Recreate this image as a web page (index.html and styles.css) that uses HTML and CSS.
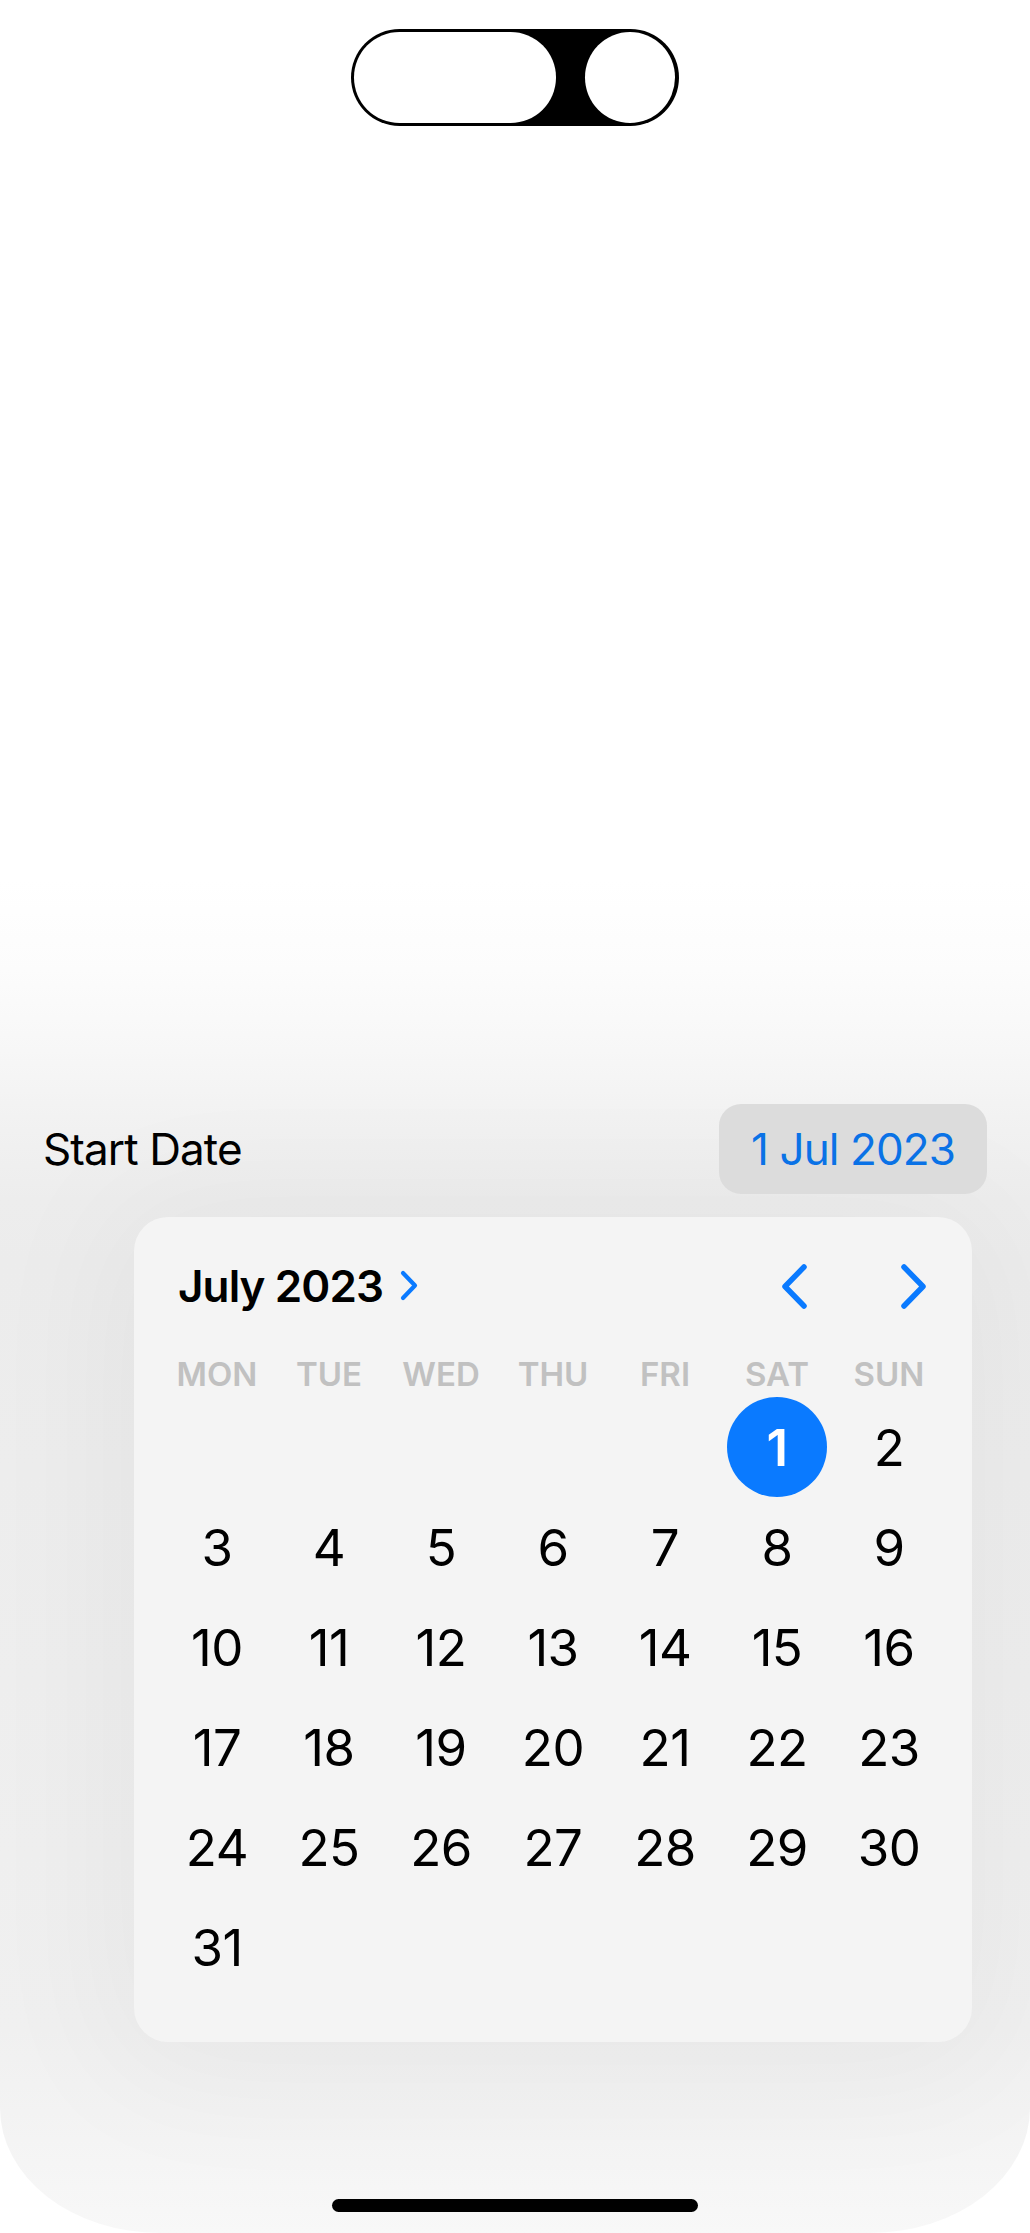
FILE: index.html
```html
<!DOCTYPE html>
<html lang="en">
<head>
<meta charset="utf-8">
<title>Start Date</title>
<link rel="stylesheet" href="styles.css">
</head>
<body>
<div class="island"><span class="island-pill"></span><span class="island-dot"></span></div>

<main class="sheet">
  <div class="field-row">
    <span class="field-label">Start Date</span>
    <button class="date-button">1 Jul 2023</button>
  </div>

  <section class="popover">
    <header class="cal-header">
      <div class="cal-title">
        <span>July 2023</span>
        <svg class="title-chevron" width="18" height="31" viewBox="0 0 18 31"><polyline points="3,3 15,15.5 3,28" fill="none" stroke="#0a7aff" stroke-width="4.2" stroke-linecap="round" stroke-linejoin="round"/></svg>
      </div>
      <div class="cal-nav">
        <svg width="28" height="47" viewBox="0 0 28 47"><polyline points="24,4 5,23.5 24,43" fill="none" stroke="#0a7aff" stroke-width="5.5" stroke-linecap="round" stroke-linejoin="round"/></svg>
        <svg width="28" height="47" viewBox="0 0 28 47"><polyline points="4,4 23,23.5 4,43" fill="none" stroke="#0a7aff" stroke-width="5.5" stroke-linecap="round" stroke-linejoin="round"/></svg>
      </div>
    </header>

    <div class="weekdays">
      <span>MON</span><span>TUE</span><span>WED</span><span>THU</span><span>FRI</span><span>SAT</span><span>SUN</span>
    </div>

    <div class="days">
      <span></span><span></span><span></span><span></span><span></span>
      <span class="day selected"><span class="sel-circle">1</span></span>
      <span class="day">2</span>
      <span class="day">3</span><span class="day">4</span><span class="day">5</span><span class="day">6</span><span class="day">7</span><span class="day">8</span><span class="day">9</span>
      <span class="day">10</span><span class="day">11</span><span class="day">12</span><span class="day">13</span><span class="day">14</span><span class="day">15</span><span class="day">16</span>
      <span class="day">17</span><span class="day">18</span><span class="day">19</span><span class="day">20</span><span class="day">21</span><span class="day">22</span><span class="day">23</span>
      <span class="day">24</span><span class="day">25</span><span class="day">26</span><span class="day">27</span><span class="day">28</span><span class="day">29</span><span class="day">30</span>
      <span class="day">31</span>
    </div>
  </section>

  <div class="home-indicator"></div>
</main>
</body>
</html>
```

FILE: styles.css
```css
* { box-sizing: border-box; }

html, body {
  margin: 0;
  padding: 0;
}

body {
  width: 1030px;
  height: 2233px;
  overflow: hidden;
  background: #ffffff;
  font-family: "Inter", "Noto Sans", "Liberation Sans", sans-serif;
  color: #000;
}

.island {
  display: flex;
  gap: 29px;
  width: 328px;
  height: 97px;
  margin: 29px auto 0;
  padding: 3px;
  background: #000;
  border-radius: 49px;
}

.island-pill {
  width: 202px;
  height: 91px;
  background: #fff;
  border-radius: 46px;
}

.island-dot {
  width: 90px;
  height: 91px;
  background: #fff;
  border-radius: 50%;
}

.sheet {
  margin-top: 754px;
  padding: 224px 0 21px;
  border-radius: 0 0 160px 160px / 0 0 125px 125px;
  background: linear-gradient(to bottom,
    #ffffff 0px,
    #fcfcfc 90px,
    #f7f7f7 170px,
    #f1f1f1 250px,
    #ededed 320px,
    #ececec 380px,
    #eeeeee 800px,
    #f0f0f0 1150px,
    #f4f4f4 1260px,
    #f8f8f8 1353px);
}

.field-row {
  display: flex;
  align-items: center;
  justify-content: space-between;
  height: 90px;
  padding: 0 43px;
}

.field-label {
  font-size: 44px;
  letter-spacing: -0.9px;
  line-height: 1;
}

.date-button {
  height: 90px;
  padding: 0 32px;
  border: none;
  border-radius: 22px;
  background: #dcdcdc;
  color: #0a72e6;
  font-family: inherit;
  font-size: 44px;
  letter-spacing: -0.9px;
  line-height: 1;
}

.popover {
  width: 838px;
  margin: 23px 0 0 134px;
  padding: 39px 27px 45px;
  background: #f4f4f4;
  border-radius: 34px;
  box-shadow: 0 10px 140px 30px rgba(0, 0, 0, 0.04);
}

.cal-header {
  display: flex;
  align-items: center;
  justify-content: space-between;
  height: 60px;
  padding: 0 17px;
}

.cal-title {
  display: flex;
  align-items: center;
  gap: 17px;
  font-size: 44px;
  font-weight: 600;
  letter-spacing: -0.9px;
  line-height: 1;
}

.title-chevron {
  display: block;
  margin-top: -2px;
}

.cal-nav {
  display: flex;
  align-items: center;
  gap: 92px;
}

.cal-nav svg { display: block; }

.weekdays {
  display: grid;
  grid-template-columns: repeat(7, 112px);
  height: 40px;
  margin-top: 38px;
  align-items: center;
  justify-items: center;
  font-size: 33px;
  font-weight: 600;
  color: #c1c1c1;
  line-height: 1;
}

.days {
  display: grid;
  grid-template-columns: repeat(7, 112px);
  grid-auto-rows: 100px;
  margin-top: 3px;
}

.day {
  display: flex;
  align-items: center;
  justify-content: center;
  font-size: 51px;
  line-height: 1;
  letter-spacing: -0.5px;
}

.sel-circle {
  display: flex;
  align-items: center;
  justify-content: center;
  width: 100px;
  height: 100px;
  border-radius: 50%;
  background: #0a7aff;
  color: #fff;
  font-weight: 600;
}

.home-indicator {
  width: 366px;
  height: 13px;
  margin: 157px auto 0;
  background: #000;
  border-radius: 7px;
}
```
